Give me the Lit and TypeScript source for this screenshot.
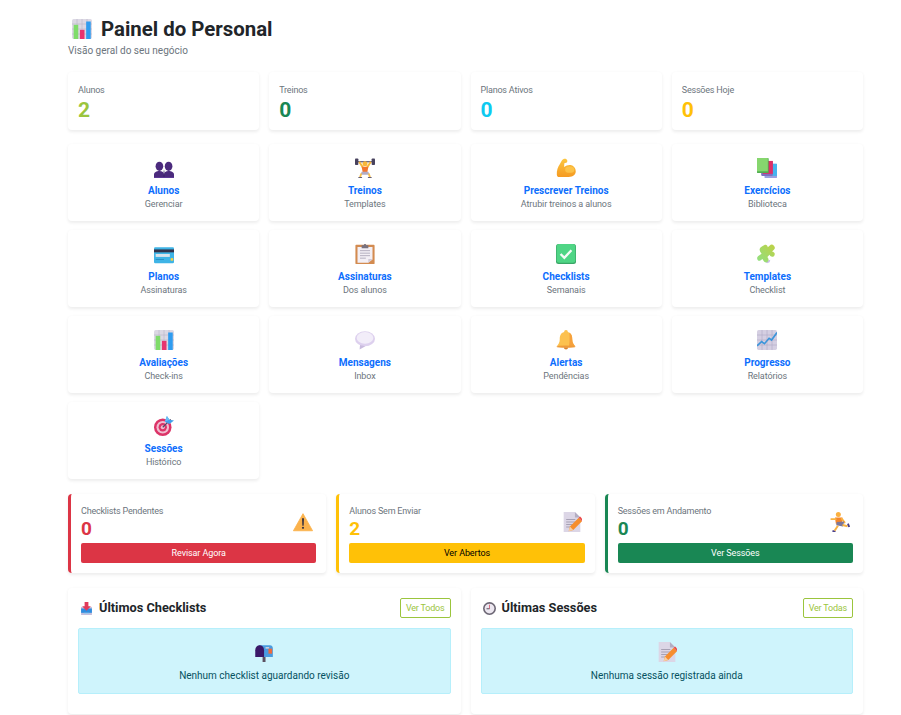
import { LitElement, html, css, svg } from "lit";
import { customElement } from "lit/decorators.js";

const ICONS: Record<string, unknown> = {
  chart: svg`<rect x="0" y="0" width="24" height="24" rx="2" fill="#dcd8e4"/><path d="M0 6h24M0 12h24M0 18h24M6 0v24M12 0v24M18 0v24" stroke="#bdb8c8" stroke-width=".8"/><rect x="2" y="7" width="5.500" height="17" fill="#7fdc6a"/><rect x="9.500" y="13" width="5.500" height="11" fill="#e8336f"/><rect x="17" y="3" width="5.500" height="21" fill="#2f9cf0"/>`,
  people: svg`<g fill="#4b2a7d"><ellipse cx="6.500" cy="10" rx="4.600" ry="5.500"/><path d="M0 24v-4c0-3 3-4.500 6.500-4.500S12 17 12 20v4z"/><ellipse cx="17.500" cy="10" rx="4.600" ry="5.500"/><path d="M12 24v-4c0-3 2-4.500 5.500-4.500S24 17 24 20v4z"/></g><path d="M12 15v9" stroke="#321b5e" stroke-width=".8"/><path d="M0 23.500h24" stroke="#5f3a98" stroke-width="1.200"/>`,
  lifter: svg`<path d="M1 4.500h22" stroke="#5b5570" stroke-width="1.500"/><rect x="0" y="0.500" width="4" height="8" rx="1" fill="#48425e"/><rect x="20" y="0.500" width="4" height="8" rx="1" fill="#48425e"/><path d="M5 4.500l4.500 7M19 4.500l-4.500 7" stroke="#f7b73a" stroke-width="2.400"/><circle cx="12" cy="7" r="3" fill="#f7b73a"/><path d="M8 10.500h8l-1.200 6.500H9.200z" fill="#f2762e"/><path d="M8 16.500h8l1.500 3.500h-11z" fill="#b2acc4"/><path d="M7.500 18.500l-1.500 5M16.500 18.500l1.500 5" stroke="#f7c04c" stroke-width="2.200"/><path d="M4 23.500h4.500M15.500 23.500h4.500" stroke="#5b5570" stroke-width="1.200"/>`,
  flex: svg`<defs><linearGradient id="gFlex" x1="0" y1="0" x2="0" y2="1"><stop offset="0" stop-color="#fcc63f"/><stop offset="1" stop-color="#f59a22"/></linearGradient></defs><path d="M1 20C.5 15 2.500 10.500 4.500 7.500L7 3C8.500 .8 11 .6 12.500 1.500c1.500 1 1.300 3 .5 4l-3 .8-.3 4.500c2.500-2 5.500-2.800 8-2.300 3.500.8 6 3.800 6 7.500 0 4-3 6.800-8.500 6.800H4C2 22.800 1.200 22 1 20z" fill="url(#gFlex)"/><ellipse cx="16.500" cy="14" rx="5.500" ry="3.800" fill="#fdca52" opacity=".75"/>`,
  books: svg`<rect x="9" y="7" width="15" height="17" rx="1" fill="#9aa0e0"/><rect x="12" y="7" width="12" height="14.500" fill="#45b4ee"/><rect x="5" y="3.500" width="14" height="18" rx="1" fill="#7e6fc0"/><rect x="7" y="3.500" width="12" height="15.500" fill="#de2f66"/><rect x="0" y="0" width="14" height="18" rx="1" fill="#4fae50"/><rect x="0" y="0" width="13" height="16" fill="#86d66e"/>`,
  card: svg`<rect x="0" y="4" width="24" height="19" rx="1.500" fill="#3fb4e6"/><rect x="0" y="6.500" width="24" height="3.500" fill="#33324a"/><rect x="2" y="12" width="17" height="3.500" fill="#d9e3ec"/><rect x="20" y="17" width="3" height="3" fill="#fcd23c"/><rect x="2" y="18" width="10" height="1.200" fill="#2992c8"/>`,
  clip: svg`<rect x="0.500" y="1" width="23" height="23" rx="1" fill="#d38b50"/><path d="M3 3.500h18v15l-5 4H3z" fill="#f3eff5"/><path d="M6 8h12M6 11h12M6 14h12M6 17h7" stroke="#a7a2b4" stroke-width="1"/><path d="M16 22.500V18h5z" fill="#cfc9d8"/><path d="M8 1.500h2.500c.3-2 2.700-2 3 0H16v3.500H8z" fill="#78727f"/>`,
  check: svg`<rect x="0" y="0" width="24" height="24" rx="3" fill="#3aa667"/><rect x="0.800" y="0" width="22.400" height="22.500" rx="3" fill="#4fd585"/><path d="M5.500 12l4.500 4.500 8.500-9" fill="none" stroke="#f6fbf7" stroke-width="2.800"/>`,
  puzzle: svg`<defs><linearGradient id="gPuz" x1="0" y1="1" x2="1" y2="0"><stop offset="0" stop-color="#8fe184"/><stop offset="1" stop-color="#bfd043"/></linearGradient></defs><path d="M10 21l6-2-1 3-3 1z" fill="#c9bde6"/><path d="M8.500 1.500c2.500-1.300 4 0 4.500 2.500l2-2c2-2 3.500-1.800 5-.3 1.800 1.800 2 3.700.3 5.300l-2.300 2c2.500.5 4 2 3 4.500-1 2.300-3.300 2.200-5 1L15 13l-2.500 2.500c1.500 2 2 3.800.5 5.500-1.700 1.800-3.700 1.500-5.200-.8L6.500 18l-2 1.500c-1.800 1.300-3.300.8-4-.8-.8-1.800-.2-3.200 1.500-4.500l3.500-2.500L4 9.500C2.500 7 3 4.800 5 3.500 6.300 2.600 7.500 2 8.500 1.500z" fill="url(#gPuz)"/>`,
  speech: svg`<ellipse cx="12" cy="10.500" rx="12" ry="9" fill="#ddd0ee"/><ellipse cx="12" cy="9.500" rx="10" ry="7" fill="#f2edf9"/><path d="M6 18l-.5 5.500 7-4z" fill="#c9bbde"/>`,
  bell: svg`<path d="M12 0c-1.500 0-2.200 1-2.200 2.300C5.500 3.500 4.500 7 4.500 11c0 4-1.500 6-3.500 8.500h22C21 17 19.500 15 19.500 11c0-4-1-7.500-5.300-8.700C14.200 1 13.500 0 12 0z" fill="#fcc14f"/><path d="M16 3.200c3 1.500 3.500 4.800 3.500 7.800 0 4 1.500 6 3.500 8.500h-7.500c1-4 1-12.800.5-16.300z" fill="#f6a13c"/><ellipse cx="12" cy="20" rx="11.500" ry="1.400" fill="#ee9b3a"/><path d="M9.500 21c0 3 5 3 5 0z" fill="#d9822d"/>`,
  progress: svg`<rect x="0" y="0" width="24" height="24" rx="2" fill="#d5cfe2"/><path d="M0 6h24M0 12h24M0 18h24M6 0v24M12 0v24M18 0v24" stroke="#b4adc8" stroke-width=".8"/><path d="M0 19l5.500-5 3.500 2.500 5.500-6.500 3 2L24 3" fill="none" stroke="#3c95da" stroke-width="2"/>`,
  target: svg`<circle cx="10.500" cy="13.500" r="10.500" fill="#dc3468"/><circle cx="10.500" cy="13.500" r="7.500" fill="#f0bdd0"/><circle cx="10.500" cy="13.500" r="5" fill="#dc3468"/><circle cx="10.500" cy="13.500" r="2.400" fill="#f0bdd0"/><path d="M10.500 13.500l9.500-9.500" stroke="#4f4968" stroke-width="1.300"/><path d="M13 7l2.500-7 3 4.500 5.500 1-5.500 4-5.500-2.500z" fill="#3f9fea"/><path d="M15.500 0l3 4.500-5.500 2.500z" fill="#6cbcf4"/>`,
  warn: svg`<path d="M12 2L23.500 22.500H.5z" fill="#fbb24c" stroke="#fbb24c" stroke-width="1" stroke-linejoin="round"/><path d="M10.800 7.500h2.400l-.4 9h-1.600z" fill="#3a3440"/><circle cx="12" cy="19" r="1.300" fill="#3a3440"/>`,
  memo: svg`<path d="M2 0h13.500L22 6.500V24H2z" fill="#dcd6e6"/><path d="M15.500 0L22 6.500h-6.500z" fill="#b3adc2"/><path d="M5 9h11M5 12h11M5 15h8M5 18h5" stroke="#9c96a9" stroke-width="1"/><path d="M8 23l1.500-5.500L20 7l4 4L13.500 21.500z" fill="#f68e2e"/><path d="M20 7l1.700-1.500 3.300 3.500-1 2z" fill="#ec4a4a"/><path d="M8 23l1.500-5.500 4 4z" fill="#f6cfa6"/>`,
  runner: svg`<circle cx="10" cy="3" r="3" fill="#fbb040"/><path d="M6 6.500h9l-.8 7.500H7z" fill="#f5852a"/><path d="M7 8.500H1.500M14 8l3.500 4.500" fill="none" stroke="#f9b240" stroke-width="2.200" stroke-linecap="round"/><path d="M8 12l9-.5-1.500 6-8-1.500z" fill="#7d7798"/><path d="M15 15.500l6 1.500" fill="none" stroke="#f9b240" stroke-width="2.400"/><path d="M9.500 16.500l-4 6" fill="none" stroke="#f9b240" stroke-width="2.400"/><path d="M21.500 14l1.500 4" stroke="#4b3f88" stroke-width="2.200"/><path d="M3 22.500l3.500 1.500" stroke="#4b3f88" stroke-width="2.200"/>`,
  inbox: svg`<path d="M2 9h20v15H2z" fill="#c5bedb"/><path d="M2 12h20v8H2z" fill="#2f8ee0"/><path d="M7 20h10v2H7z" fill="#9ac8ee"/><path d="M8.500 0h7v8h4.500l-8 8-8-8h4.500z" fill="#e13a5a"/>`,
  clock: svg`<circle cx="12" cy="12" r="12" fill="#6c6674"/><circle cx="12" cy="12" r="9" fill="#ece7f0"/><path d="M12 5v7.500" stroke="#d64a62" stroke-width="1.400"/><path d="M12 12.500H6.500" stroke="#3a3440" stroke-width="1.500"/>`,
  mailbox: svg`<g transform="translate(1.500 0) scale(.88 1)"><path d="M5 4h15c3 0 4 2 4 4v10H5z" fill="#4a9be0"/><path d="M6 4C3 4 0 6 0 10v8h12v-8c0-4-3-6-6-6z" fill="#3a1868"/><rect x="14" y="6" width="5" height="2" fill="#c5cfe0"/><rect x="18" y="8" width="5" height="6" fill="#ef6a3c"/><rect x="10" y="18" width="4" height="6" fill="#5c5060"/></g>`,
};

const stats = [
  ["Alunos", "2", "lime"],
  ["Treinos", "0", "green"],
  ["Planos Ativos", "0", "cyan"],
  ["Sessões Hoje", "0", "amber"],
];

const actions = [
  ["people", "Alunos", "Gerenciar"],
  ["lifter", "Treinos", "Templates"],
  ["flex", "Prescrever Treinos", "Atrubir treinos a alunos"],
  ["books", "Exercícios", "Biblioteca"],
  ["card", "Planos", "Assinaturas"],
  ["clip", "Assinaturas", "Dos alunos"],
  ["check", "Checklists", "Semanais"],
  ["puzzle", "Templates", "Checklist"],
  ["chart", "Avaliações", "Check-ins"],
  ["speech", "Mensagens", "Inbox"],
  ["bell", "Alertas", "Pendências"],
  ["progress", "Progresso", "Relatórios"],
  ["target", "Sessões", "Histórico"],
];

const alerts = [
  ["Checklists Pendentes", "0", "warn", "Revisar Agora", "red"],
  ["Alunos Sem Enviar", "2", "memo", "Ver Abertos", "yellow"],
  ["Sessões em Andamento", "0", "runner", "Ver Sessões", "forest"],
];

const panels = [
  ["inbox", "Últimos Checklists", "Ver Todos", "mailbox", "Nenhum checklist aguardando revisão"],
  ["clock", "Últimas Sessões", "Ver Todas", "memo", "Nenhuma sessão registrada ainda"],
];

const icon = (name: string, cls: string) =>
  html`<svg class="ico ${cls}" viewBox="0 0 24 24" aria-hidden="true">${ICONS[name]}</svg>`;

@customElement("app-root")
export class AppRoot extends LitElement {
  static styles = css`
    :host {
      display: block;
      box-sizing: border-box;
      height: 715px;
      overflow: hidden;
      padding: 16px 38px 0 68px;
      background: #fff;
      color: #212529;
      font-family: Roboto, sans-serif;
    }
    * { box-sizing: border-box; }
    .ico { display: block; flex: none; }
    h1 {
      display: flex;
      align-items: center;
      gap: 9px;
      margin: 0 0 0 4px;
      height: 26px;
      font-size: 20.400px;
      font-weight: 700;
      line-height: 26px;
    }
    .i-title { width: 20px; height: 20px; }
    .sub {
      margin: 2px 0 0;
      height: 14px;
      font-size: 10px;
      line-height: 14px;
      color: #6c757d;
    }
    .grid4 {
      display: grid;
      grid-template-columns: repeat(4, 1fr);
      gap: 9px 10px;
    }
    .card {
      background: #fff;
      border-radius: 4px;
      box-shadow: 0 1.600px 3.200px rgba(0, 0, 0, 0.075);
    }
    .stats { margin-top: 14px; }
    .stat {
      height: 58px;
      padding: 12px 10px 0;
    }
    .stat-l {
      font-size: 9px;
      letter-spacing: -0.200px;
      line-height: 13px;
      color: #6c757d;
    }
    .stat-v {
      margin-top: 1px;
      font-size: 21px;
      font-weight: 700;
      line-height: 25px;
    }
    .lime { color: #9bc53d; }
    .green { color: #198754; }
    .cyan { color: #0dcaf0; }
    .amber { color: #ffc107; }
    .actions { margin-top: 14px; }
    .action {
      height: 77px;
      padding-top: 14px;
      display: flex;
      flex-direction: column;
      align-items: center;
      text-align: center;
    }
    .i-action { width: 20px; height: 20px; }
    .a-t {
      margin-top: 6px;
      font-size: 10px;
      font-weight: 700;
      line-height: 14px;
      color: #0d6efd;
    }
    .a-s {
      font-size: 9px;
      letter-spacing: -0.100px;
      line-height: 13px;
      color: #6c757d;
    }
    .alerts {
      margin-top: 15px;
      display: grid;
      grid-template-columns: repeat(3, 1fr);
      gap: 10px;
    }
    .alert {
      height: 79px;
      padding: 11px 10px 0 10px;
      border-left: 3px solid;
    }
    .b-red { border-left-color: #dc3545; }
    .b-yellow { border-left-color: #ffc107; }
    .b-forest { border-left-color: #198754; }
    .al-row {
      display: flex;
      justify-content: space-between;
      align-items: flex-start;
      height: 38px;
    }
    .al-l {
      font-size: 9px;
      letter-spacing: -0.200px;
      line-height: 13px;
      color: #6c757d;
    }
    .al-v {
      font-size: 19px;
      font-weight: 700;
      line-height: 22px;
    }
    .t-red { color: #dc3545; }
    .t-yellow { color: #ffc107; }
    .t-forest { color: #198754; }
    .i-alert { width: 20px; height: 20px; margin-top: 7px; margin-right: 3px; }
    .btn {
      display: block;
      height: 20px;
      border-radius: 2px;
      text-align: center;
      font-size: 9px;
      letter-spacing: -0.100px;
      line-height: 20px;
    }
    .bg-red { background: #dc3545; color: #fff; }
    .bg-yellow { background: #ffc107; color: #000; }
    .bg-forest { background: #198754; color: #fff; }
    .panels {
      margin-top: 15px;
      display: grid;
      grid-template-columns: repeat(2, 1fr);
      gap: 10px;
    }
    .panel {
      height: 126px;
      padding: 10px;
    }
    .p-head {
      display: flex;
      align-items: center;
      height: 20px;
    }
    .i-head { width: 13px; height: 13px; margin: 0 6px 0 2px; }
    .p-head h2 {
      flex: 1;
      margin: 0;
      font-size: 12.750px;
      font-weight: 700;
      line-height: 20px;
    }
    .outline {
      height: 20px;
      padding: 0 5px;
      border: 1px solid #9bc53d;
      border-radius: 2px;
      font-size: 9px;
      letter-spacing: -0.200px;
      line-height: 18px;
      color: #9bc53d;
    }
    .empty {
      margin-top: 10px;
      height: 66px;
      padding-top: 13px;
      display: flex;
      flex-direction: column;
      align-items: center;
      background: #cff4fc;
      border: 1px solid #b6effb;
      border-radius: 2px;
      color: #055160;
      font-size: 10px;
      line-height: 14px;
    }
    .i-empty { width: 20px; height: 20px; margin-bottom: 7px; }
  `;

  render() {
    return html`
      <h1>${icon("chart", "i-title")}Painel do Personal</h1>
      <p class="sub">Visão geral do seu negócio</p>

      <section class="grid4 stats">
        ${stats.map(
          ([l, v, c]) => html`<div class="card stat">
            <div class="stat-l">${l}</div>
            <div class="stat-v ${c}">${v}</div>
          </div>`
        )}
      </section>

      <section class="grid4 actions">
        ${actions.map(
          ([i, t, s]) => html`<div class="card action">
            ${icon(i, "i-action")}
            <div class="a-t">${t}</div>
            <div class="a-s">${s}</div>
          </div>`
        )}
      </section>

      <section class="alerts">
        ${alerts.map(
          ([l, v, i, b, c]) => html`<div class="card alert b-${c}">
            <div class="al-row">
              <div>
                <div class="al-l">${l}</div>
                <div class="al-v t-${c}">${v}</div>
              </div>
              ${icon(i, "i-alert")}
            </div>
            <div class="btn bg-${c}">${b}</div>
          </div>`
        )}
      </section>

      <section class="panels">
        ${panels.map(
          ([i, t, b, e, m]) => html`<div class="card panel">
            <div class="p-head">
              ${icon(i, "i-head")}
              <h2>${t}</h2>
              <div class="outline">${b}</div>
            </div>
            <div class="empty">
              ${icon(e, "i-empty")}
              <div>${m}</div>
            </div>
          </div>`
        )}
      </section>
    `;
  }
}
